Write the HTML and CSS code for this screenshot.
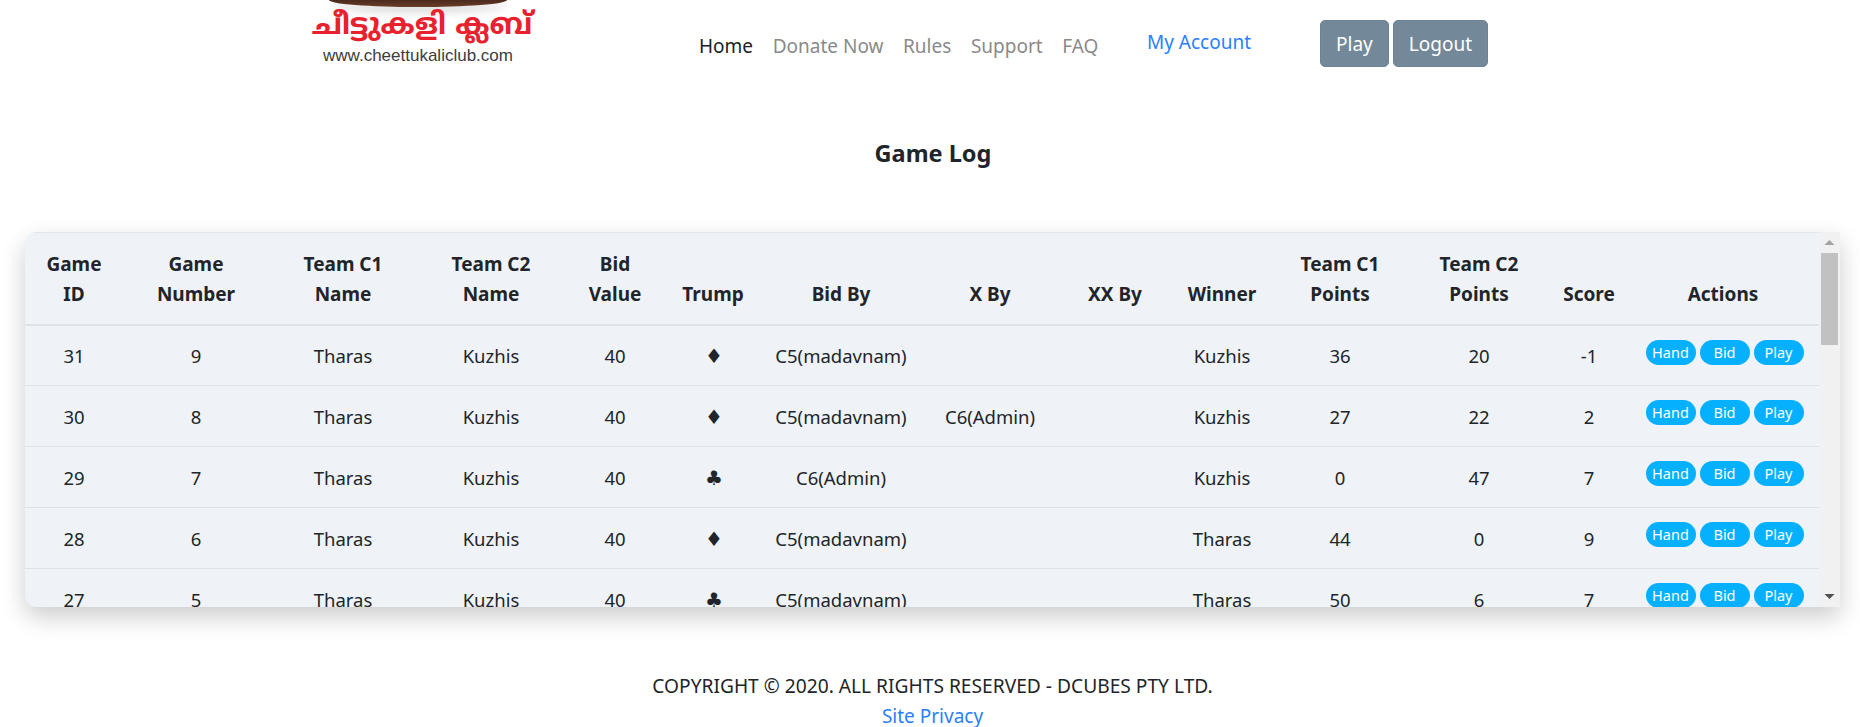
FILE: index.html
```html
<!DOCTYPE html>
<html lang="en">

<head>
  <meta charset="UTF-8" />
  <title>Game Log</title>
  <link rel="stylesheet" href="styles.css">
</head>

<body>
  <header class="cabecalho">
    <div class="logo">
      <div class="logo-prato"></div>
      <div class="logo-titulo" lang="ml">ചീട്ടുകളി ക്ലബ്</div>
      <div class="logo-site">www.cheettukaliclub.com</div>
    </div>
    <nav class="menu">
      <a class="menu-item ativo" href="#">Home</a>
      <a class="menu-item" href="#">Donate Now</a>
      <a class="menu-item" href="#">Rules</a>
      <a class="menu-item" href="#">Support</a>
      <a class="menu-item" href="#">FAQ</a>
    </nav>
    <a class="conta" href="#">My Account</a>
    <div class="botoes">
      <button class="botao">Play</button>
      <button class="botao">Logout</button>
    </div>
  </header>

  <h1 class="titulo">Game Log</h1>

  <div class="cartao">
    <div class="area-tabela">
      <table class="tabela">
        <colgroup>
          <col class="c-id"><col class="c-num"><col class="c-team"><col class="c-team">
          <col class="c-bid"><col class="c-trump"><col class="c-by"><col class="c-x">
          <col class="c-xx"><col class="c-win"><col class="c-p1"><col class="c-p2">
          <col class="c-score"><col class="c-act">
        </colgroup>
        <thead>
          <tr>
            <th>Game ID</th><th>Game Number</th><th>Team C1 Name</th><th>Team C2 Name</th>
            <th>Bid Value</th><th>Trump</th><th>Bid By</th><th>X By</th><th>XX By</th>
            <th>Winner</th><th>Team C1 Points</th><th>Team C2 Points</th><th>Score</th><th>Actions</th>
          </tr>
        </thead>
        <tbody>
          <tr>
            <td>31</td><td>9</td><td>Tharas</td><td>Kuzhis</td><td>40</td><td class="naipe">♦</td><td>C5(madavnam)</td><td></td><td></td>
            <td>Kuzhis</td><td>36</td><td>20</td><td>-1</td>
            <td class="acoes"><a class="pilula" href="#">Hand</a><a class="pilula" href="#">Bid</a><a class="pilula" href="#">Play</a></td>
          </tr>
          <tr>
            <td>30</td><td>8</td><td>Tharas</td><td>Kuzhis</td><td>40</td><td class="naipe">♦</td><td>C5(madavnam)</td><td>C6(Admin)</td><td></td>
            <td>Kuzhis</td><td>27</td><td>22</td><td>2</td>
            <td class="acoes"><a class="pilula" href="#">Hand</a><a class="pilula" href="#">Bid</a><a class="pilula" href="#">Play</a></td>
          </tr>
          <tr>
            <td>29</td><td>7</td><td>Tharas</td><td>Kuzhis</td><td>40</td><td class="naipe">♣</td><td>C6(Admin)</td><td></td><td></td>
            <td>Kuzhis</td><td>0</td><td>47</td><td>7</td>
            <td class="acoes"><a class="pilula" href="#">Hand</a><a class="pilula" href="#">Bid</a><a class="pilula" href="#">Play</a></td>
          </tr>
          <tr>
            <td>28</td><td>6</td><td>Tharas</td><td>Kuzhis</td><td>40</td><td class="naipe">♦</td><td>C5(madavnam)</td><td></td><td></td>
            <td>Tharas</td><td>44</td><td>0</td><td>9</td>
            <td class="acoes"><a class="pilula" href="#">Hand</a><a class="pilula" href="#">Bid</a><a class="pilula" href="#">Play</a></td>
          </tr>
          <tr>
            <td>27</td><td>5</td><td>Tharas</td><td>Kuzhis</td><td>40</td><td class="naipe">♣</td><td>C5(madavnam)</td><td></td><td></td>
            <td>Tharas</td><td>50</td><td>6</td><td>7</td>
            <td class="acoes"><a class="pilula" href="#">Hand</a><a class="pilula" href="#">Bid</a><a class="pilula" href="#">Play</a></td>
          </tr>
        </tbody>
      </table>
    </div>
    <div class="barra">
      <div class="seta"><svg width="21" height="21"><path d="M10.5 8l5 5h-10z" fill="#a3a3a3" /></svg></div>
      <div class="trilho"><div class="polegar"></div></div>
      <div class="seta"><svg width="21" height="21"><path d="M10.5 13l5-5h-10z" fill="#505050" /></svg></div>
    </div>
  </div>

  <footer class="rodape">
    <div class="copyright">COPYRIGHT © 2020. ALL RIGHTS RESERVED - DCUBES PTY LTD.</div>
    <a class="link" href="#">Site Privacy</a>
  </footer>
</body>

</html>
```

FILE: styles.css
```css
body,
html {
  margin: 0;
  padding: 0;
  height: 100%;
  background-color: #fff;
  color: #212529;
  font-family: 'Noto Sans', sans-serif;
  font-size: 19px;
  overflow: hidden;
}

a {
  text-decoration: none;
}

/* cabecalho */
.cabecalho {
  display: flex;
  height: 88px;
}

.logo {
  width: 250px;
  margin-left: 293px;
  text-align: center;
}

.logo-prato {
  width: 178px;
  height: 7px;
  margin: 0 auto 0;
  background: linear-gradient(#4a2a1c, #6b3d29);
  border-radius: 0 0 89px 89px / 0 0 7px 7px;
  box-shadow: 0 5px 9px rgba(0, 0, 0, 0.18);
}

.logo-titulo {
  margin-top: 1px;
  padding-left: 8px;
  font-family: 'Noto Sans Malayalam', 'Noto Sans', sans-serif;
  font-size: 29.7px;
  font-weight: 700;
  line-height: 37px;
  color: #e8212f;
  white-space: nowrap;
}

.logo-site {
  margin-top: 2px;
  font-family: 'Liberation Sans', sans-serif;
  font-size: 17px;
  line-height: 18px;
  color: #3d3d3d;
}

.menu {
  display: flex;
  gap: 19.6px;
  margin-left: 156px;
  padding-top: 33px;
  line-height: 26px;
}

.menu-item {
  color: #8a8a8a;
}

.menu-item.ativo {
  color: #212121;
}

.conta {
  margin-left: 48.6px;
  padding-top: 29px;
  line-height: 26px;
  color: #2b7fff;
}

.botoes {
  display: flex;
  gap: 4px;
  margin-left: 69px;
  padding-top: 20px;
}

.botao {
  height: 47px;
  padding: 0 15px;
  background-color: #738899;
  border: 1px solid #6c8295;
  border-radius: 5px;
  color: #fff;
  font: inherit;
}

/* titulo */
.titulo {
  margin: 49px 0 63px;
  padding-left: 6px;
  font-size: 23.5px;
  font-weight: 700;
  line-height: 32px;
  text-align: center;
}

/* tabela */
.cartao {
  display: flex;
  width: 1815px;
  height: 375px;
  margin-left: 25px;
  background-color: #eff3f8;
  border-radius: 12px 0 0 12px;
  box-shadow: 0 10px 24px rgba(0, 0, 0, 0.2);
  overflow: hidden;
}

.area-tabela {
  flex: 1;
  overflow: hidden;
}

.barra {
  display: flex;
  flex-direction: column;
  width: 21px;
  background-color: #f1f1f1;
}

.seta {
  height: 21px;
}

.seta svg {
  display: block;
}

.trilho {
  flex: 1;
  padding: 0 2px;
}

.polegar {
  height: 92px;
  background-color: #c1c1c1;
}

.tabela {
  width: 1794px;
  border-collapse: collapse;
  table-layout: fixed;
  text-align: center;
}

.c-id { width: 98px; }
.c-num { width: 146px; }
.c-team { width: 148px; }
.c-bid { width: 100px; }
.c-trump { width: 96px; }
.c-by { width: 160px; }
.c-x { width: 138px; }
.c-xx { width: 112px; }
.c-win { width: 102px; }
.c-p1 { width: 134px; }
.c-p2 { width: 144px; }
.c-score { width: 76px; }
.c-act { width: 192px; }

.tabela thead tr {
  height: 92px;
  border-top: 1px solid #e2e5ea;
  border-bottom: 2px solid #dee2e6;
}

.tabela th {
  padding: 12px 12px 15px;
  font-size: 19px;
  font-weight: 700;
  line-height: 30px;
  vertical-align: bottom;
}

.tabela tbody tr {
  height: 61px;
  border-bottom: 1px solid #dee2e6;
}

.tabela td {
  padding: 1px 0 0;
  font-size: 18.5px;
  line-height: 30px;
  vertical-align: middle;
}

.tabela td.naipe {
  padding-left: 2px;
  font-family: 'DejaVu Sans', sans-serif;
  font-size: 20px;
}

.tabela td.acoes {
  padding: 14px 1px 0 0;
  vertical-align: top;
  line-height: 0;
  white-space: nowrap;
}

.pilula {
  display: inline-block;
  width: 50px;
  height: 25px;
  margin-left: 4px;
  background-color: #05b0ff;
  border-radius: 13px;
  color: #fff;
  font-size: 14.5px;
  line-height: 24px;
}

/* rodape */
.rodape {
  margin-top: 64px;
  padding-left: 5px;
  line-height: 30px;
  text-align: center;
}

.copyright {
  font-size: 19.2px;
}

.link {
  color: #2b7fff;
}
```
